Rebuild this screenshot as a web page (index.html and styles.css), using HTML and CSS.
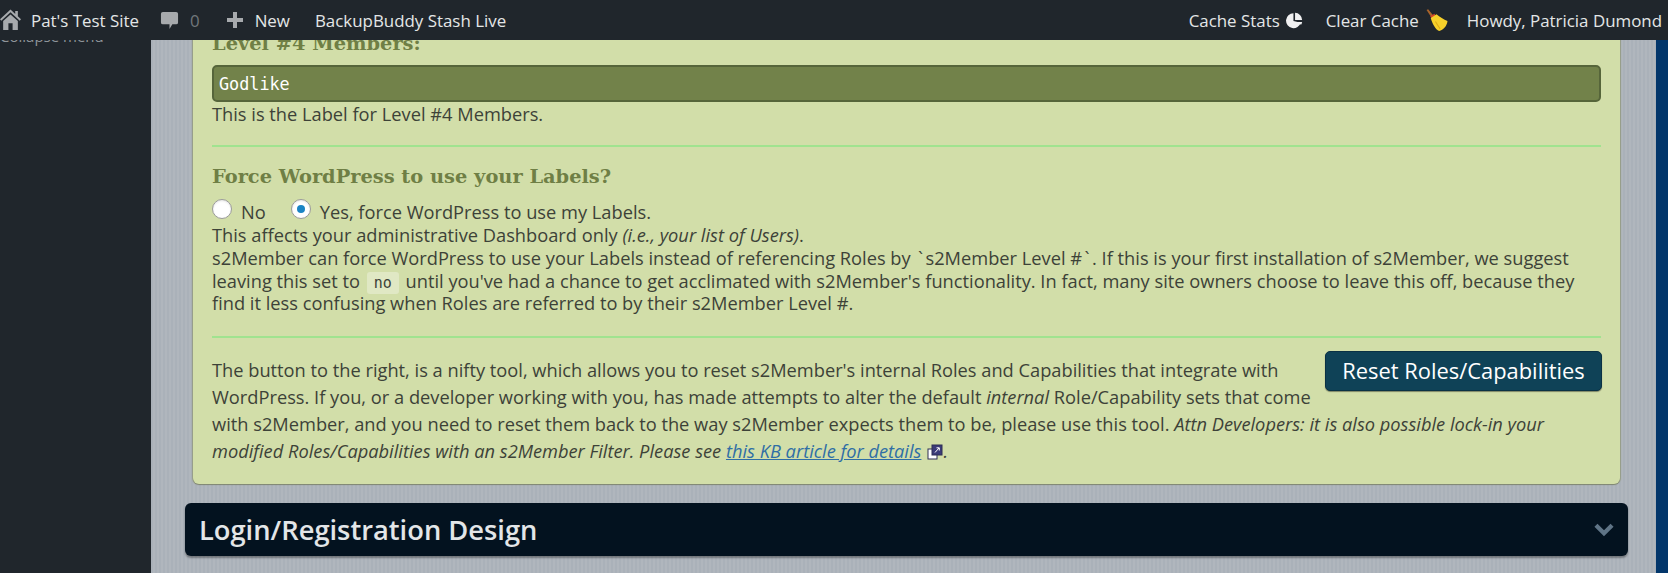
FILE: index.html
```html
<!DOCTYPE html>
<html lang="en">
<head>
<meta charset="utf-8">
<title>s2Member Options</title>
<link rel="stylesheet" href="styles.css">
</head>
<body>
<header class="adminbar">
  <div class="bar-group">
    <a class="bar-item site"><svg class="ic-home" viewBox="0 0 20 20"><path d="M10 .5 0 9.800l1.200 1.300L10 3.200l8.800 7.900L20 9.800l-3-2.800V2h-2.500v2.700z" fill="#a7aaad"/><path fill-rule="evenodd" d="M3 11.500 10 5.200l7 6.300V20H3zM8 13.500V20h4v-6.500z" fill="#a7aaad"/></svg>Pat's Test Site</a>
    <a class="bar-item comments"><svg class="ic-comment" viewBox="0 0 20 20"><path d="M3 1h14a2 2 0 0 1 2 2v9a2 2 0 0 1-2 2h-4l-3 5v-5H3a2 2 0 0 1-2-2V3a2 2 0 0 1 2-2z" fill="#a7aaad"/></svg><span class="count">0</span></a>
    <a class="bar-item new"><svg class="ic-plus" viewBox="0 0 18 18"><path d="M7 1h4v6h6v4h-6v6H7v-6H1V7h6z" fill="#a7aaad"/></svg>New</a>
    <a class="bar-item stash">BackupBuddy Stash Live</a>
  </div>
  <div class="bar-group">
    <a class="bar-item stats">Cache Stats<svg class="ic-pie" viewBox="0 0 16 16"><path d="M7 1.200A7 7 0 1 0 13.800 10L7 8.500z" fill="#f0f0f1"/><path d="M8.500 .8a7 7 0 0 1 6.700 6.700H8.500z" fill="#f0f0f1"/><path d="M9.500 9.300h5.700a7 7 0 0 1-1 2.800z" fill="#f0f0f1"/></svg></a>
    <a class="bar-item clear">Clear Cache<svg class="ic-broom" viewBox="0 0 22 22"><path d="M1.500 1 3 .3 8.500 7 6.500 8.500z" fill="#a9642b"/><path d="m5 7 4-2.500 1 1.500-4 2.500z" fill="#d8422a"/><path d="M5.500 8.500 11 5c3 2.500 7 5 10.500 6.500-.5 5-4 8.500-8 9.500-3.500-1.500-6.500-7-8-12.500z" fill="#f6d02a"/><path d="M10 12c1.500 2.500 3 5 4.500 7" fill="none" stroke="#dca915" stroke-width="1"/></svg></a>
    <a class="bar-item howdy">Howdy, Patricia Dumond</a>
  </div>
</header>
<div class="layout">
  <aside class="sidebar"><span class="collapse">Collapse menu</span></aside>
  <main class="content">
    <section class="panel">
      <h3 class="label-title">Level #4 Members:</h3>
      <input class="text-field" type="text" value="Godlike">
      <p class="hint">This is the Label for Level #4 Members.</p>
      <hr class="rule rule-first">
      <h3 class="force-title">Force WordPress to use your Labels?</h3>
      <div class="radios">
        <label class="radio-label"><span class="radio"></span>No</label>
        <label class="radio-label"><span class="radio radio-on"></span>Yes, force WordPress to use my Labels.</label>
      </div>
      <p class="desc">This affects your administrative Dashboard only <em>(i.e., your list of Users)</em>.<br>
      s2Member can force WordPress to use your Labels instead of referencing Roles by <span class="tick">`</span>s2Member Level #<span class="tick">`</span>. If this is your first installation of s2Member, we suggest leaving this set to <code class="inline-code">no</code> until you've had a chance to get acclimated with s2Member's functionality. In fact, many site owners choose to leave this off, because they find it less confusing when Roles are referred to by their s2Member Level #.</p>
      <hr class="rule rule-second">
      <div class="reset-block">
        <button class="reset-btn" type="button">Reset Roles/Capabilities</button>
        <p class="reset-text">The button to the right, is a nifty tool, which allows you to reset s2Member's internal Roles and Capabilities that integrate with WordPress. If you, or a developer working with you, has made attempts to alter the default <em>internal</em> Role/Capability sets that come with s2Member, and you need to reset them back to the way s2Member expects them to be, please use this tool. <em>Attn Developers: it is also possible lock-in your modified Roles/Capabilities with an s2Member Filter. Please see <a class="kb-link">this KB article for details</a><svg class="ic-ext" viewBox="0 0 16 16"><rect x="1" y="5" width="9" height="10" fill="#fff" stroke="#2f2f55"/><rect x="5" y="1" width="10" height="10" fill="#3b3b78" stroke="#2f2f55"/><path d="M8 8.500 12 4M9.500 3.800H12.300V6.500" fill="none" stroke="#fff"/></svg>.</em></p>
      </div>
    </section>
    <section class="group-bar">
      <h2 class="group-title">Login/Registration Design</h2>
      <svg class="ic-chevron" viewBox="0 0 20 14"><path d="M2.500 3 10 10.500 17.500 3" fill="none" stroke="#5f7486" stroke-width="4"/></svg>
    </section>
  </main>
  <div class="edge"></div>
</div>
</body>
</html>
```
FILE: styles.css
```css
* { box-sizing: border-box; }
html, body { margin: 0; height: 573px; overflow: hidden; background: #20262c; }
body { font-family: "Open Sans", sans-serif; font-size: 18.250px; color: #3d4238; }

.adminbar {
  position: absolute; top: 0; left: 0; right: 0; height: 40px; z-index: 5;
  display: flex; justify-content: space-between; align-items: center;
  background: #20262c; color: #e4e6e7; font-size: 16.900px;
  padding-right: 6px;
}
.bar-group { display: flex; align-items: center; }
.bar-item { display: flex; align-items: center; white-space: nowrap; }
.ic-home { width: 21px; height: 21px; margin: -1px 10px 0 0; }
.site { margin-right: 21px; }
.ic-comment { width: 19px; height: 21px; margin-right: 11px; }
.count { color: #70767b; }
.comments { margin-right: 26px; }
.ic-plus { width: 18px; height: 18px; margin-right: 11px; }
.new { margin-right: 25px; }
.ic-pie { width: 17px; height: 17px; margin-left: 6px; }
.stats { margin-right: 23px; }
.ic-broom { width: 23px; height: 23px; margin-left: 6px; }
.clear { margin-right: 19px; }

.layout { display: flex; height: 573px; }
.sidebar { width: 151px; flex: none; background: #20262c; overflow: hidden; padding-top: 25px; }
.collapse { display: block; font-size: 15px; line-height: 22px; color: #8f959a; white-space: nowrap; }
.content {
  flex: 1; padding: 0 28px 0 34px; overflow: hidden;
  background: repeating-linear-gradient(90deg, #aab1b9 0 2px, #b0b6bd 2px 4px);
}
.edge { width: 12px; flex: none; background: #02366b; }

.panel {
  margin: 0 8px 0 8px; height: 484px; padding: 32px 19px 0 19px;
  background: #d2dea9; border-radius: 0 0 6px 6px;
  box-shadow: 0 1px 1px #7f8570, 1px 0 1px #9aa08a, -1px 0 1px #9aa08a;
}
h3 { margin: 0; font-family: "DejaVu Serif", "Liberation Serif", serif; font-weight: 700; color: #6f7f45; }
.label-title { font-size: 19.400px; line-height: 24px; }
.text-field {
  display: block; width: 100%; height: 37px; margin-top: 9px; padding: 0 5px;
  background: #72824a; border: 2px solid #56653a; border-radius: 5px;
  color: #fff; font: 16.800px "DejaVu Sans Mono", monospace;
}
.hint { margin: 0; line-height: 24px; height: 43px; }
.rule { border: 0; height: 2px; margin: 0; background: #a0e38f; }
.rule-first { margin-top: 0; }
.force-title { margin-top: 16px; font-size: 19.400px; line-height: 26px; padding-top: 1px; }
.radios { display: flex; gap: 25px; margin-top: 9px; height: 24px; align-items: center; }
.radio-label { display: flex; align-items: center; }
.radio {
  width: 20px; height: 20px; margin: -4px 9px 0 0; border-radius: 50%;
  background: #fff; border: 1px solid #9a9a9a; box-shadow: inset 0 1px 2px rgba(0,0,0,.1);
  display: flex; align-items: center; justify-content: center;
}
.radio-on::after { content: ""; width: 8px; height: 8px; border-radius: 50%; background: #1b84c4; }
.desc { margin: 0; padding-top: 1px; line-height: 22.800px; }
.tick { padding: 0 2.500px; }
.inline-code {
  padding: 2px 7px; margin: 0 2px; background: #e0e8c4; border-radius: 3px;
  font: 15px "DejaVu Sans Mono", monospace;
}
.rule-second { margin-top: 21px; }
.reset-block { padding-top: 18px; }
.reset-btn {
  float: right; width: 277px; height: 40px; margin: -5px -1px 0 12px; padding: 0 0 2px;
  background: #0f4257; border: 1px solid #0a3144; border-radius: 5px;
  box-shadow: 0 1px 1px rgba(0,0,0,.4);
  color: #fff; font: 21.900px "Open Sans", sans-serif;
}
.reset-text { margin: 0; line-height: 27px; }
.kb-link { color: #2f6ea5; text-decoration: underline; }
.ic-ext { width: 16px; height: 16px; margin-left: 6px; vertical-align: -2px; }

.group-bar {
  display: flex; justify-content: space-between; align-items: center;
  height: 53px; margin-top: 19px; padding: 0 13px 0 14px;
  background: #03121f; border-radius: 6px; box-shadow: 0 2px 2px rgba(0,0,0,.35);
}
.group-title { margin: 0; font-size: 27.300px; font-weight: 600; color: #e3e6e8; }
.ic-chevron { width: 22px; height: 15px; }
```
